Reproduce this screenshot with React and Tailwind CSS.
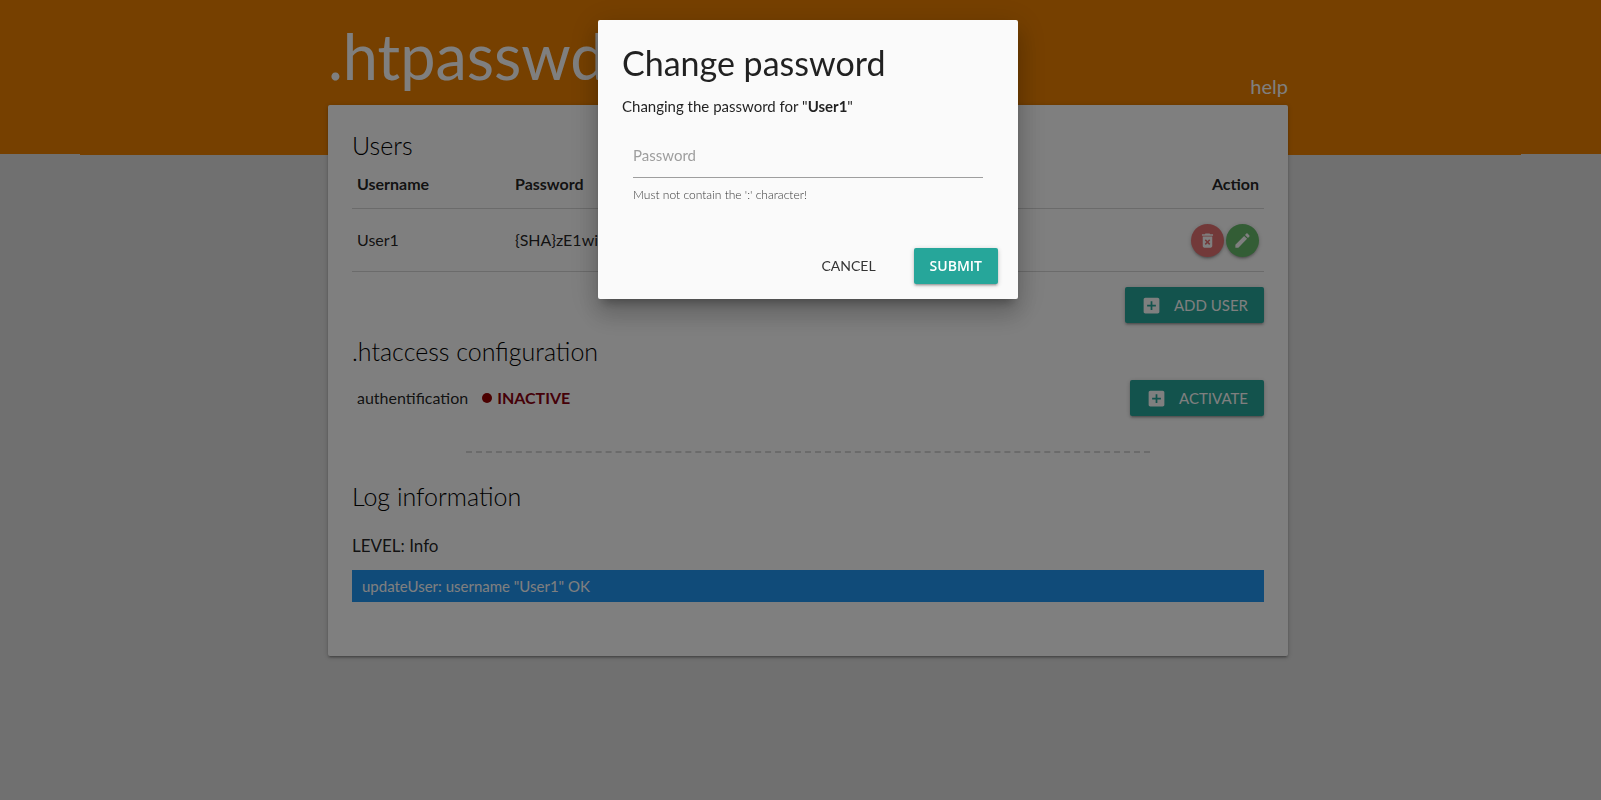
import React from "react";

const raised =
  "shadow-[0_2px_2px_0_rgba(0,0,0,0.14),0_3px_1px_-2px_rgba(0,0,0,0.12),0_1px_5px_0_rgba(0,0,0,0.2)]";

function AddBoxIcon() {
  return (
    <svg viewBox="0 0 24 24" className="size-[21px] fill-current" aria-hidden="true">
      <path d="M19 3H5c-1.11 0-2 .9-2 2v14c0 1.1.89 2 2 2h14c1.1 0 2-.9 2-2V5c0-1.1-.9-2-2-2zm-2 10h-4v4h-2v-4H7v-2h4V7h2v4h4v2z" />
    </svg>
  );
}

function DeleteIcon() {
  return (
    <svg viewBox="0 0 24 24" className="size-[19px] fill-current" aria-hidden="true">
      <path d="M6 19c0 1.1.9 2 2 2h8c1.1 0 2-.9 2-2V7H6v12zm2.46-7.12l1.41-1.41L12 12.59l2.12-2.12 1.41 1.41L13.41 14l2.12 2.12-1.41 1.41L12 15.41l-2.12 2.12-1.41-1.41L10.59 14l-2.13-2.12zM15.5 4l-1-1h-5l-1 1H5v2h14V4z" />
    </svg>
  );
}

function EditIcon() {
  return (
    <svg viewBox="0 0 24 24" className="size-[19px] fill-current" aria-hidden="true">
      <path d="M3 17.25V21h3.75L17.81 9.94l-3.75-3.75L3 17.25zM20.71 7.04c.39-.39.39-1.02 0-1.41l-2.34-2.34c-.39-.39-1.02-.39-1.41 0l-1.83 1.83 3.75 3.75 1.83-1.83z" />
    </svg>
  );
}

function ActionButton({ children }) {
  return (
    <button
      type="button"
      className={`flex h-9 items-center gap-3 rounded-[2px] bg-[#26a69a] px-4 text-[15px] text-white uppercase ${raised}`}
    >
      <AddBoxIcon />
      {children}
    </button>
  );
}

function RoundButton({ label, className, children }) {
  return (
    <button
      type="button"
      aria-label={label}
      className={`flex size-[33px] items-center justify-center rounded-full text-white ${raised} ${className}`}
    >
      {children}
    </button>
  );
}

function UsersSection() {
  return (
    <section>
      <h2 className="text-[25px] leading-7 font-light text-black">Users</h2>
      <table className="w-full text-left text-base leading-[22px]">
        <thead>
          <tr className="border-b border-[#d6d6d6]">
            <th className="w-[158px] px-[5px] pt-3.5 pb-[13px] font-bold">Username</th>
            <th className="px-[5px] pt-3.5 pb-[13px] font-bold">Password</th>
            <th className="px-[5px] pt-3.5 pb-[13px] text-right font-bold">Action</th>
          </tr>
        </thead>
        <tbody>
          <tr className="border-b border-[#d6d6d6]">
            <td className="px-[5px]">User1</td>
            <td className="px-[5px]">{"{SHA}zE1wi"}</td>
            <td className="px-[5px] pt-[15px] pb-3.5">
              <div className="flex justify-end gap-0.5">
                <RoundButton label="Delete user" className="bg-[#e57373]">
                  <DeleteIcon />
                </RoundButton>
                <RoundButton label="Edit user" className="bg-[#66bb6a]">
                  <EditIcon />
                </RoundButton>
              </div>
            </td>
          </tr>
        </tbody>
      </table>
      <div className="mt-[15px] flex justify-end">
        <ActionButton>Add user</ActionButton>
      </div>
    </section>
  );
}

function ConfigSection() {
  return (
    <section className="mt-3.5">
      <h2 className="text-[25px] leading-7 font-light text-black">.htaccess configuration</h2>
      <div className="mt-[15px] flex items-center justify-between pl-[5px]">
        <p className="flex items-center text-base">
          <span>authentification</span>
          <span className="ml-3.5 size-2.5 rounded-full bg-[#960000]" />
          <span className="ml-[5px] font-bold text-[#8b0010]">INACTIVE</span>
        </p>
        <ActionButton>Activate</ActionButton>
      </div>
    </section>
  );
}

function LogSection() {
  return (
    <section>
      <h2 className="text-[25px] leading-7 font-light text-black">Log information</h2>
      <p className="mt-[22px] text-[17px] leading-[27px]">LEVEL: Info</p>
      <p className="mt-[11px] bg-[#2196f3] px-2.5 py-1 leading-6 text-white">
        updateUser: username "User1" OK
      </p>
    </section>
  );
}

function PasswordDialog() {
  return (
    <div className="fixed inset-0 flex items-start justify-center bg-black/50 pt-5 pl-[15px]">
      <form
        role="dialog"
        aria-labelledby="dialog-title"
        className="w-[420px] rounded-[2px] bg-[#fafafa] shadow-[0_16px_24px_2px_rgba(0,0,0,0.14),0_6px_30px_5px_rgba(0,0,0,0.12),0_8px_10px_-5px_rgba(0,0,0,0.3)]"
      >
        <div className="px-6 pt-6">
          <h1 id="dialog-title" className="text-[34px] leading-[38px]">
            Change password
          </h1>
          <p className="mt-[13px] leading-[23px]">
            Changing the password for "<b className="font-bold">User1</b>"
          </p>
          <div className="mt-4 px-[11px]">
            <div className="grid items-center">
              <label
                htmlFor="password"
                className="pointer-events-none col-start-1 row-start-1 pb-0.5 text-[#9e9e9e]"
              >
                Password
              </label>
              <input
                id="password"
                type="password"
                className="col-start-1 row-start-1 h-11 w-full border-b border-[#9e9e9e] bg-transparent"
              />
            </div>
            <p className="mt-2 text-xs leading-[18px] font-light text-black/80">
              Must not contain the ':' character!
            </p>
          </div>
        </div>
        <div className="mt-11 flex justify-end gap-[22px] pr-5 pb-[15px]">
          <button type="button" className="h-9 px-4 text-sm text-[#343434] uppercase">
            Cancel
          </button>
          <button
            type="submit"
            className={`h-9 rounded-[2px] bg-[#26a69a] px-4 font-['Open_Sans',sans-serif] text-sm font-semibold text-white uppercase ${raised}`}
          >
            Submit
          </button>
        </div>
      </form>
    </div>
  );
}

export default function App() {
  return (
    <div className="min-h-screen bg-[#e0e0e0] font-['Lato',sans-serif] text-[15px] leading-[22px] font-normal text-black/87">
      <div className="grid">
        <div className="col-start-1 row-start-1">
          <div className="h-[154px] bg-[#ec8000]" />
          <div className="mx-[5%] h-px bg-[#ec8000]" />
        </div>
        <div className="z-0 col-start-1 row-start-1 pl-[15px]">
          <div className="mx-auto max-w-[960px]">
            <header className="flex h-[105px] items-end justify-between text-white">
              <span className="pb-[13px] text-[63px] leading-[72px]">.htpasswd</span>
              <a href="#help" className="pb-[7px] text-xl leading-6">
                help
              </a>
            </header>
            <main className={`rounded-[2px] bg-white px-6 pt-[26px] pb-[54px] ${raised}`}>
              <UsersSection />
              <ConfigSection />
              <hr className="mx-auto mt-[35px] mb-[29px] w-3/4 border-t-2 border-dashed border-[#d6d6d6]" />
              <LogSection />
            </main>
          </div>
        </div>
      </div>
      <PasswordDialog />
    </div>
  );
}
